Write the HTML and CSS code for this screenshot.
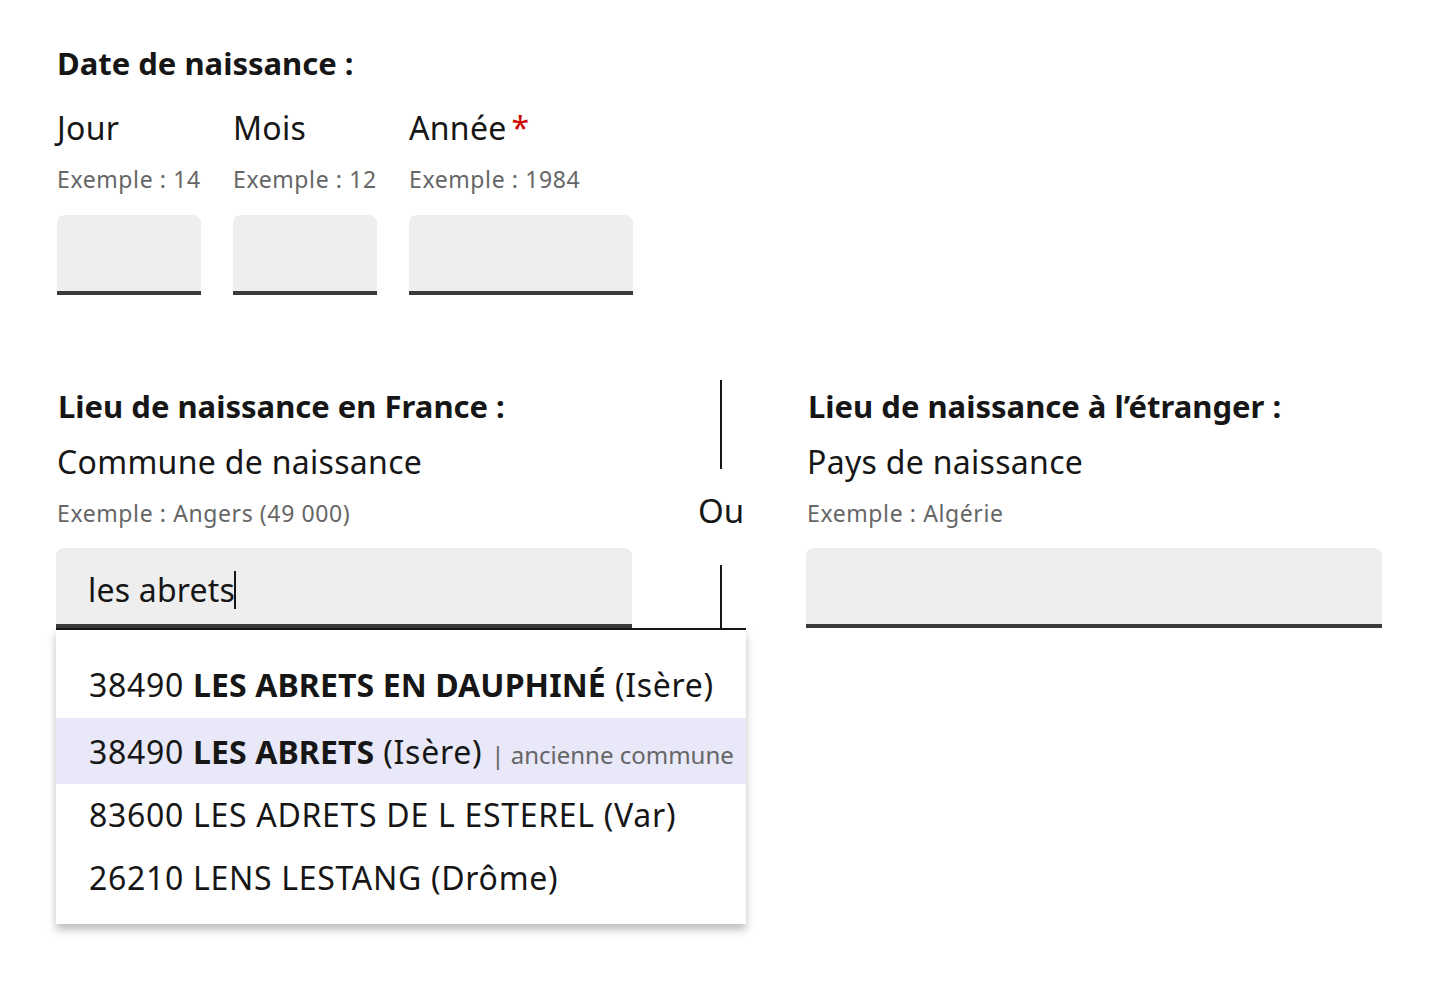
FILE: index.html
```html
<!DOCTYPE html>
<html lang="fr">
<head>
<meta charset="utf-8">
<title>Naissance</title>
<link rel="stylesheet" href="styles.css">
</head>
<body>
<div class="page">
  <section class="date-block">
    <h2 class="legend">Date de naissance :</h2>
    <div class="date-fields">
      <div class="field f-jour">
        <label class="label">Jour</label>
        <span class="hint">Exemple : 14</span>
        <div class="input"></div>
      </div>
      <div class="field f-mois">
        <label class="label">Mois</label>
        <span class="hint">Exemple : 12</span>
        <div class="input"></div>
      </div>
      <div class="field f-annee">
        <label class="label">Année<span class="req">*</span></label>
        <span class="hint">Exemple : 1984</span>
        <div class="input"></div>
      </div>
    </div>
  </section>

  <section class="place-block">
    <div class="col">
      <h2 class="legend">Lieu de naissance en France :</h2>
      <label class="label big">Commune de naissance</label>
      <span class="hint">Exemple : Angers (49 000)</span>
      <div class="input-wrap">
        <div class="input filled"><span class="value">les abrets</span><span class="caret"></span></div>
        <ul class="dropdown">
          <li class="r1">38490 <b>LES ABRETS EN DAUPHINÉ</b> (Isère)</li>
          <li class="r2 active">38490 <b>LES ABRETS</b> (Isère) <span class="note">| ancienne commune</span></li>
          <li class="r3">83600 LES ADRETS DE L ESTEREL (Var)</li>
          <li class="r4">26210 LENS LESTANG (Drôme)</li>
        </ul>
      </div>
    </div>
    <div class="divider">
      <span class="vline top"></span>
      <span class="ou">Ou</span>
      <span class="vline bottom"></span>
    </div>
    <div class="col">
      <h2 class="legend">Lieu de naissance à l’étranger :</h2>
      <label class="label big">Pays de naissance</label>
      <span class="hint">Exemple : Algérie</span>
      <div class="input-wrap">
        <div class="input"></div>
      </div>
    </div>
  </section>
</div>
</body>
</html>
```

FILE: styles.css
```css
* { box-sizing: border-box; }
html, body { margin: 0; padding: 0; background: #fff; }
body {
  min-height: 982px;
  font-family: "Noto Sans", "Open Sans", sans-serif;
  color: #161616;
}
.page {
  padding: 44px 0 0 57px;
  min-height: 982px;
}
.legend {
  margin: 0;
  font-size: 31px;
  line-height: 38px;
  font-weight: 700;
  letter-spacing: 0;
}
.date-fields {
  display: flex;
  gap: 32px;
  margin-top: 26px;
}
.field { display: flex; flex-direction: column; }
.f-jour, .f-mois { width: 144px; }
.f-annee { width: 224px; }
.label {
  font-size: 32px;
  line-height: 40px;
  letter-spacing: 0.3px;
  display: block;
}
.req { color: #ce0500; margin-left: 5px; }
.hint {
  display: block;
  font-size: 23px;
  line-height: 30px;
  letter-spacing: 0.6px;
  color: #666;
  margin-top: 16px;
}
.input {
  height: 80px;
  background: #eeeeee;
  border-radius: 8px 8px 0 0;
  border-bottom: 4px solid #3a3a3a;
}
.field .input { margin-top: 21px; }
.place-block {
  display: flex;
  margin-top: 81px;
  margin-left: -1px;
}
.col {
  width: 576px;
  display: flex;
  flex-direction: column;
  padding-top: 11px;
}
.col .legend { padding-left: 2px; }
.col .label, .col .hint { padding-left: 1px; }
.label.big { font-size: 32px; line-height: 44px; margin-top: 15px; }
.col .hint { margin-top: 14px; }
.input-wrap { position: relative; margin-top: 20px; }
.divider {
  width: 174px;
  display: flex;
  flex-direction: column;
  align-items: center;
  padding: 4px 0 0 4px;
}
.vline { width: 2px; background: #161616; display: block; }
.vline.top { height: 89px; }
.vline.bottom { height: 63px; }
.ou { font-size: 33px; line-height: 40px; margin: 22px 0 34px; }
.input.filled {
  display: flex;
  align-items: center;
  padding-left: 32px;
  padding-top: 7px;
  font-size: 32px;
}
.value { line-height: 40px; letter-spacing: 0.2px; }
.caret { width: 2px; height: 38px; background: #161616; margin-left: -1px; }
.dropdown {
  position: absolute;
  left: 0;
  top: 100%;
  width: 690px;
  margin: 0;
  padding: 20px 0 14px;
  list-style: none;
  background: #fff;
  border-top: 2px solid #161616;
  box-shadow: 0 6px 8px rgba(0, 0, 0, 0.25);
  z-index: 2;
}
.dropdown li {
  font-size: 32px;
  display: flex;
  align-items: center;
  padding-left: 33px;
  white-space: pre;
  letter-spacing: 0.7px;
}
.dropdown .r1 { height: 68px; }
.dropdown .r2 { height: 66px; }
.dropdown .r3 { height: 60px; }
.dropdown .r4 { height: 66px; }
.dropdown li b { font-weight: 700; letter-spacing: 0.1px; }
.dropdown li.active { background: #e8e8f8; }
.note { font-size: 24px; color: #666; letter-spacing: 0; padding-top: 6px; }
```
